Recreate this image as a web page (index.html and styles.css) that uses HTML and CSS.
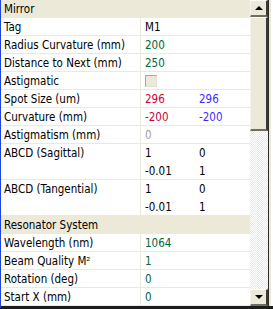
FILE: index.html
```html
<!DOCTYPE html>
<html lang="en">
<head>
  <meta charset="UTF-8">
  <title>Mirror properties</title>
  <link rel="stylesheet" href="styles.css">
</head>
<body>
  <div class="frame">
    <div class="grid">
      <div class="head">Mirror</div>
      <div class="row"><div class="label">Tag</div><div class="value">M1</div></div>
      <div class="row"><div class="label">Radius Curvature (mm)</div><div class="value green">200</div></div>
      <div class="row"><div class="label">Distance to Next (mm)</div><div class="value green">250</div></div>
      <div class="row"><div class="label">Astigmatic</div><div class="value"><span class="check"></span></div></div>
      <div class="row"><div class="label">Spot Size (um)</div><div class="value"><span class="col red">296</span><span class="blue">296</span></div></div>
      <div class="row"><div class="label">Curvature (mm)</div><div class="value"><span class="col red">-200</span><span class="blue">-200</span></div></div>
      <div class="row"><div class="label">Astigmatism (mm)</div><div class="value gray">0</div></div>
      <div class="row tall">
        <div class="label">ABCD (Sagittal)</div>
        <div class="value">
          <div class="line"><span class="col">1</span><span>0</span></div>
          <div class="line"><span class="col">-0.01</span><span>1</span></div>
        </div>
      </div>
      <div class="row tall">
        <div class="label">ABCD (Tangential)</div>
        <div class="value">
          <div class="line"><span class="col">1</span><span>0</span></div>
          <div class="line"><span class="col">-0.01</span><span>1</span></div>
        </div>
      </div>
      <div class="head">Resonator System</div>
      <div class="row"><div class="label">Wavelength (nm)</div><div class="value green">1064</div></div>
      <div class="row"><div class="label">Beam Quality M²</div><div class="value green">1</div></div>
      <div class="row"><div class="label">Rotation (deg)</div><div class="value green">0</div></div>
      <div class="row"><div class="label">Start X (mm)</div><div class="value green">0</div></div>
    </div>
    <div class="scroll">
      <div class="btn"><span class="arrow up"></span></div>
      <div class="thumb"></div>
      <div class="track"></div>
      <div class="btn"><span class="arrow down"></span></div>
    </div>
    <div class="edge"></div>
  </div>
</body>
</html>
```
FILE: styles.css
```css
body {
  margin: 0;
  background: #ffffff;
  font-family: "DejaVu Sans Condensed", "DejaVu Sans", sans-serif;
  font-stretch: condensed;
  font-size: 11.5px;
  color: #000000;
}
.frame {
  display: flex;
  width: 273px;
  height: 309px;
  box-sizing: border-box;
  border-left: 1px solid #1f44d8;
  border-bottom: 3px solid #1c1c1c;
  overflow: hidden;
}
.grid {
  width: 249px;
  background: #ffffff;
}
.head {
  height: 18px;
  line-height: 18px;
  padding-left: 3px;
  background: #ece9d8;
}
.row {
  display: flex;
  height: 17px;
  border-bottom: 1px solid #ece9d8;
}
.row.tall {
  height: 35px;
}
.label {
  width: 136px;
  padding-left: 3px;
  line-height: 18px;
  border-right: 1px solid #ece9d8;
  white-space: nowrap;
}
.value {
  flex: 1;
  padding-left: 4px;
  line-height: 18px;
  white-space: nowrap;
}
.line {
  height: 18px;
  line-height: 18px;
}
.col {
  display: inline-block;
  width: 54px;
}
.green { color: #00653a; }
.red { color: #d0003a; }
.blue { color: #3a2cff; }
.gray { color: #a0a0a0; }
.check {
  display: inline-block;
  width: 10px;
  height: 10px;
  margin-top: 3px;
  vertical-align: top;
  background: #ece9d8;
  border: 1px solid #aca899;
  border-right-color: #e4e1d2;
  border-bottom-color: #e4e1d2;
}
.scroll {
  display: flex;
  flex-direction: column;
  width: 18px;
}
.btn, .thumb {
  box-sizing: border-box;
  background: #ece9d8;
  border-top: 1px solid #ffffff;
  border-left: 1px solid #f5f4ea;
  border-right: 2px solid #3a3a36;
  border-bottom: 2px solid #6e6c63;
}
.btn {
  height: 17px;
  display: flex;
  align-items: center;
  justify-content: center;
}
.thumb {
  height: 114px;
}
.track {
  flex: 1;
  background-color: #f4f3ee;
  background-image: repeating-conic-gradient(#ffffff 0 25%, #ece9d8 0 50%);
  background-size: 2px 2px;
}
.arrow {
  width: 0;
  height: 0;
  border-left: 4px solid transparent;
  border-right: 4px solid transparent;
}
.arrow.up { border-bottom: 4px solid #000000; }
.arrow.down { border-top: 4px solid #000000; }
.edge {
  flex: 1;
  background: #ece9d8;
  border-left: 1px solid #2b2b2b;
  border-right: 2px solid #ffffff;
}
```
